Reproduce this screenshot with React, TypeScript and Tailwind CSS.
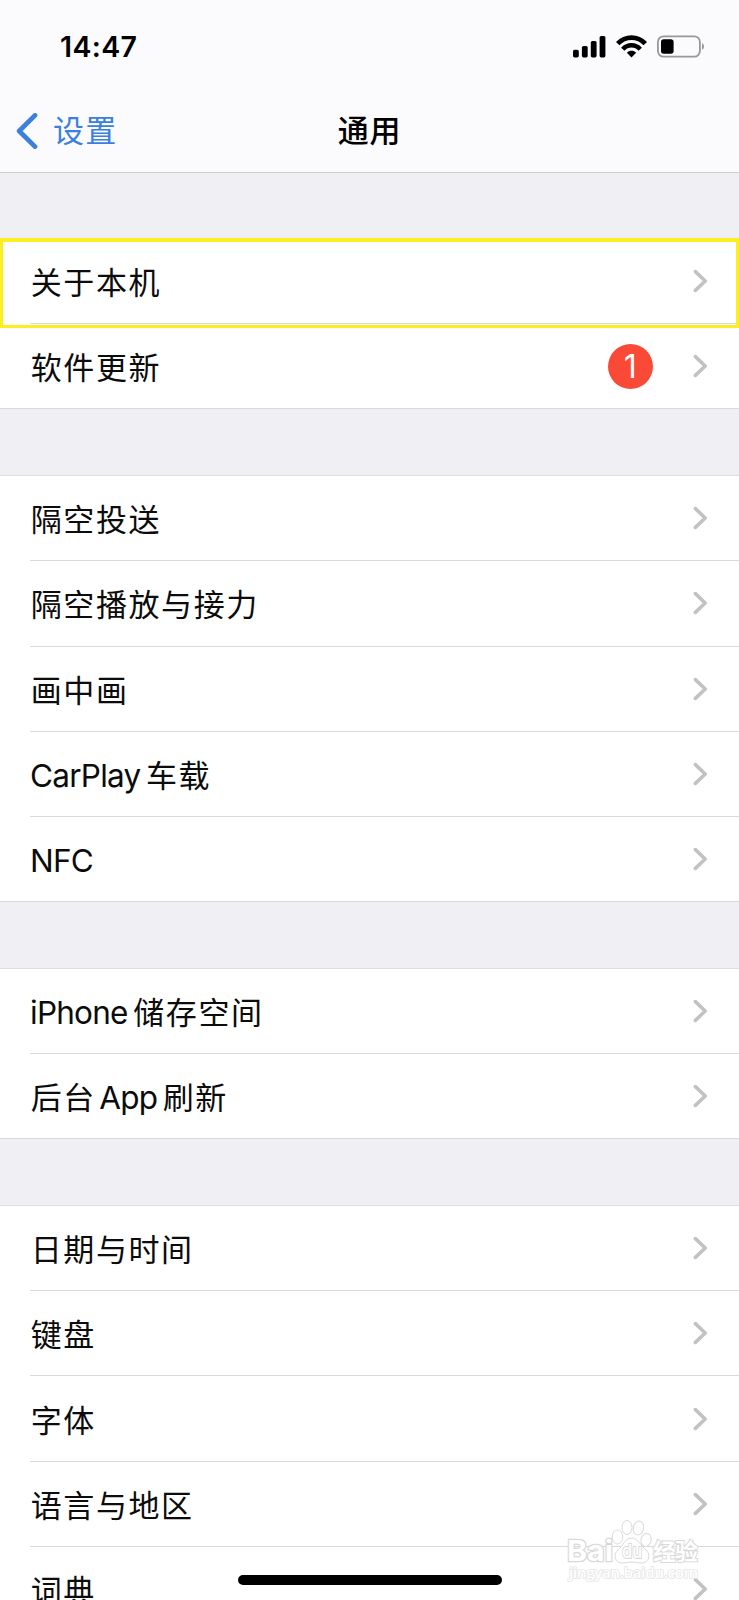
import clsx from 'clsx';

type Row = { label: string; badge?: number; highlighted?: boolean };

const groups: Row[][] = [
  [
    { label: '关于本机', highlighted: true },
    { label: '软件更新', badge: 1 },
  ],
  [
    { label: '隔空投送' },
    { label: '隔空播放与接力' },
    { label: '画中画' },
    { label: 'CarPlay车载' },
    { label: 'NFC' },
  ],
  [{ label: 'iPhone储存空间' }, { label: '后台App刷新' }],
  [
    { label: '日期与时间' },
    { label: '键盘' },
    { label: '字体' },
    { label: '语言与地区' },
    { label: '词典' },
  ],
];

const StatusBar = () => (
  <div className="flex h-[92px] items-start justify-between pl-[60px] pr-[34px]">
    <span className="mt-[31px] text-[28.5px] font-semibold leading-8 tracking-[0.35px] text-black">14:47</span>
    <div className="mt-[35px] flex items-start">
      <svg width="33" height="23" viewBox="0 0 33 23" className="mr-[10px]">
        <rect x="0" y="14.8" width="5.8" height="7.6" rx="1.6" />
        <rect x="8.9" y="11" width="5.8" height="11.4" rx="1.6" />
        <rect x="17.8" y="6" width="5.8" height="16.4" rx="1.6" />
        <rect x="26.6" y="1" width="5.8" height="21.4" rx="1.6" />
      </svg>
      <svg width="31" height="23" viewBox="0 0 31 23" className="mr-[10px]" fill="none" stroke="#000" strokeWidth="4.8">
        <path d="M1.7 8.6C9.4 0.5 21.6 0.5 29.3 8.6" />
        <path d="M6.8 14.2C11.6 9 19.4 9 24.2 14.2" strokeWidth="4.6" />
        <path d="M15.5 22.4L10.9 17.8C13.4 15.2 17.6 15.2 20.1 17.8Z" fill="#000" stroke="none" />
      </svg>
      <svg width="48" height="23" viewBox="0 0 48 23">
        <rect x="0.9" y="1.3" width="42" height="20.4" rx="5.6" fill="none" stroke="#98989b" strokeWidth="1.8" />
        <rect x="4" y="4.2" width="12.6" height="14.6" rx="2.8" />
        <path d="M45 8.2C47.7 9 47.7 14 45 14.8Z" fill="#98989b" />
      </svg>
    </div>
  </div>
);

const NavBar = () => (
  <div className="grid h-20 grid-cols-3 items-center pb-[2px]">
    <div className="flex items-center pl-[16px] text-[#3b80df]">
      <svg width="22" height="36" viewBox="0 0 22 36" fill="none" stroke="currentColor" strokeWidth="4.8" strokeLinecap="round" strokeLinejoin="round">
        <path d="M19 2.4L3.2 18L19 33.6" />
      </svg>
      <span className="ml-[15px] text-[31px] leading-10 tracking-[1.2px]">设置</span>
    </div>
    <h1 className="text-center text-[31px] font-medium leading-10 tracking-[0.8px] text-black">通用</h1>
  </div>
);

// Latin runs are set tighter than the Chinese ones around them
const Label = ({ text }: { text: string }) => (
  <span className="flex items-baseline text-[31px] leading-10 text-[#0c0c0c]">
    {text.split(/([A-Za-z]+)/).filter(Boolean).map((part, i) => {
      const latin = /[A-Za-z]/.test(part);
      return (
        <span
          key={i}
          className={clsx(
            latin ? '-ml-[0.7px] text-[31.5px] tracking-[-0.75px]' : 'tracking-[1.6px]',
            i > 0 && (latin ? 'pl-[4px]' : 'ml-[5.5px]'),
          )}
        >
          {part}
        </span>
      );
    })}
  </span>
);

const Chevron = () => (
  <svg width="15" height="24" viewBox="0 0 15 24" fill="none" stroke="#c2c2c4" strokeWidth="3.6" strokeLinecap="round" strokeLinejoin="round">
    <path d="M2.4 2.6L12.2 12L2.4 21.4" />
  </svg>
);

const SettingsRow = ({ row, last }: { row: Row; last: boolean }) => (
  <li className={clsx('relative h-[85.2px]', last ? 'border-b border-[#d9d9dc]' : '')}>
    <div className={clsx('ml-[30px] flex h-full items-center pr-[31px]', !last && 'border-b border-[#d9d9db]')}>
      <div className="flex-1 pl-[0.7px] pt-[4px]">
        <Label text={row.label} />
      </div>
      {row.badge && (
        <span className="mr-[40px] flex size-[45.5px] items-center justify-center rounded-full bg-[#fb4938] pt-px text-[32px] text-white">
          {row.badge}
        </span>
      )}
      <Chevron />
    </div>
    {row.highlighted && (
      <div className="absolute inset-x-0 -top-[1px] h-[90px] border-[3px] border-t-4 border-[#fdee1f]" />
    )}
  </li>
);

const Watermark = () => (
  <svg
    width="140"
    height="70"
    viewBox="0 0 140 70"
    className="absolute left-[564px] top-[1516px]"
    fill="#fff"
    stroke="#d9d9d9"
    strokeWidth="1"
  >
    <text x="3" y="45" fontSize="29" fontWeight="700" strokeWidth="2.4" paintOrder="stroke" textLength="46" lengthAdjust="spacingAndGlyphs">Bai</text>
    <ellipse cx="53.5" cy="21" rx="5.3" ry="7" />
    <ellipse cx="63" cy="11.5" rx="5" ry="7" />
    <ellipse cx="74.5" cy="12" rx="5.2" ry="7" transform="rotate(12 74.5 12)" />
    <ellipse cx="82" cy="24" rx="5" ry="6.5" transform="rotate(15 82 24)" />
    <path d="M67.5 22C61 22 59 30 54 34C49 38 50 47 59 47C63 47 65 46 68 46C71 46 73 47 77 47C86 47 87 38 82 34C77 30 74 22 67.5 22Z" />
    <text x="58" y="42" fontSize="19" fontWeight="500" strokeWidth="1.8" paintOrder="stroke" textLength="20" lengthAdjust="spacingAndGlyphs">du</text>
    <text x="89" y="44" fontSize="23" fontWeight="700" strokeWidth="2" paintOrder="stroke" textLength="45">经验</text>
    <text x="5" y="62" fontSize="15" fontWeight="600" stroke="#e6e6e6" strokeWidth="1.6" paintOrder="stroke" textLength="129" className="font-['Open_Sans',sans-serif]">jingyan.baidu.com</text>
  </svg>
);

export default function App() {
  return (
    <div className="relative h-[1600px] w-[739px] overflow-hidden bg-[#efeff4] font-['Inter','Noto_Sans_CJK_SC',sans-serif]">
      <header className="border-b border-[#d0d0d3] bg-[#fbfbfd]">
        <StatusBar />
        <NavBar />
      </header>

      <main className="flex flex-col gap-[66.8px] pt-[66px]">
        {groups.map((rows, i) => (
          <ul key={i} className="bg-white shadow-[0_-1px_0_#dedee2]">
            {rows.map((row, j) => (
              <SettingsRow key={row.label} row={row} last={j === rows.length - 1} />
            ))}
          </ul>
        ))}
      </main>

      <Watermark />
      <div className="absolute left-[238px] top-[1575px] h-[10px] w-[264px] rounded-full bg-black" />
    </div>
  );
}
